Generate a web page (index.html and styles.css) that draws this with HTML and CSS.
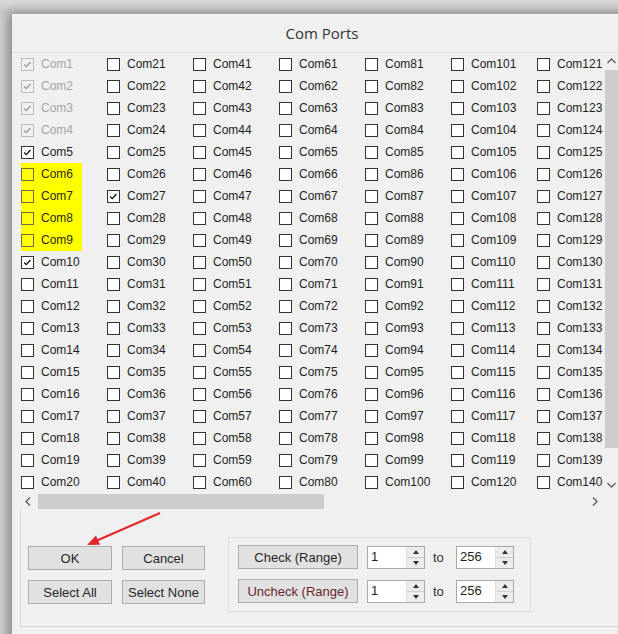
FILE: index.html
```html
<!DOCTYPE html>
<html>
<head>
<meta charset="utf-8">
<title>Com Ports</title>
<link rel="stylesheet" href="styles.css">
</head>
<body>
<div class="window">
  <div class="titlebar">Com Ports</div>

  <div class="list">
    <div class="list-main">
      <div class="grid">
        <label class="cb dis on"><i><svg viewBox="0 0 13 13"><path d="M2.5 6.5 5 9 10 3.5"/></svg></i>Com1</label>
        <label class="cb dis on"><i><svg viewBox="0 0 13 13"><path d="M2.5 6.5 5 9 10 3.5"/></svg></i>Com2</label>
        <label class="cb dis on"><i><svg viewBox="0 0 13 13"><path d="M2.5 6.5 5 9 10 3.5"/></svg></i>Com3</label>
        <label class="cb dis on"><i><svg viewBox="0 0 13 13"><path d="M2.5 6.5 5 9 10 3.5"/></svg></i>Com4</label>
        <label class="cb on"><i><svg viewBox="0 0 13 13"><path d="M2.5 6.5 5 9 10 3.5"/></svg></i>Com5</label>
        <label class="cb hl"><i></i>Com6</label>
        <label class="cb hl"><i></i>Com7</label>
        <label class="cb hl"><i></i>Com8</label>
        <label class="cb hl"><i></i>Com9</label>
        <label class="cb on"><i><svg viewBox="0 0 13 13"><path d="M2.5 6.5 5 9 10 3.5"/></svg></i>Com10</label>
        <label class="cb"><i></i>Com11</label>
        <label class="cb"><i></i>Com12</label>
        <label class="cb"><i></i>Com13</label>
        <label class="cb"><i></i>Com14</label>
        <label class="cb"><i></i>Com15</label>
        <label class="cb"><i></i>Com16</label>
        <label class="cb"><i></i>Com17</label>
        <label class="cb"><i></i>Com18</label>
        <label class="cb"><i></i>Com19</label>
        <label class="cb"><i></i>Com20</label>

        <label class="cb"><i></i>Com21</label>
        <label class="cb"><i></i>Com22</label>
        <label class="cb"><i></i>Com23</label>
        <label class="cb"><i></i>Com24</label>
        <label class="cb"><i></i>Com25</label>
        <label class="cb"><i></i>Com26</label>
        <label class="cb on"><i><svg viewBox="0 0 13 13"><path d="M2.5 6.5 5 9 10 3.5"/></svg></i>Com27</label>
        <label class="cb"><i></i>Com28</label>
        <label class="cb"><i></i>Com29</label>
        <label class="cb"><i></i>Com30</label>
        <label class="cb"><i></i>Com31</label>
        <label class="cb"><i></i>Com32</label>
        <label class="cb"><i></i>Com33</label>
        <label class="cb"><i></i>Com34</label>
        <label class="cb"><i></i>Com35</label>
        <label class="cb"><i></i>Com36</label>
        <label class="cb"><i></i>Com37</label>
        <label class="cb"><i></i>Com38</label>
        <label class="cb"><i></i>Com39</label>
        <label class="cb"><i></i>Com40</label>

        <label class="cb"><i></i>Com41</label>
        <label class="cb"><i></i>Com42</label>
        <label class="cb"><i></i>Com43</label>
        <label class="cb"><i></i>Com44</label>
        <label class="cb"><i></i>Com45</label>
        <label class="cb"><i></i>Com46</label>
        <label class="cb"><i></i>Com47</label>
        <label class="cb"><i></i>Com48</label>
        <label class="cb"><i></i>Com49</label>
        <label class="cb"><i></i>Com50</label>
        <label class="cb"><i></i>Com51</label>
        <label class="cb"><i></i>Com52</label>
        <label class="cb"><i></i>Com53</label>
        <label class="cb"><i></i>Com54</label>
        <label class="cb"><i></i>Com55</label>
        <label class="cb"><i></i>Com56</label>
        <label class="cb"><i></i>Com57</label>
        <label class="cb"><i></i>Com58</label>
        <label class="cb"><i></i>Com59</label>
        <label class="cb"><i></i>Com60</label>

        <label class="cb"><i></i>Com61</label>
        <label class="cb"><i></i>Com62</label>
        <label class="cb"><i></i>Com63</label>
        <label class="cb"><i></i>Com64</label>
        <label class="cb"><i></i>Com65</label>
        <label class="cb"><i></i>Com66</label>
        <label class="cb"><i></i>Com67</label>
        <label class="cb"><i></i>Com68</label>
        <label class="cb"><i></i>Com69</label>
        <label class="cb"><i></i>Com70</label>
        <label class="cb"><i></i>Com71</label>
        <label class="cb"><i></i>Com72</label>
        <label class="cb"><i></i>Com73</label>
        <label class="cb"><i></i>Com74</label>
        <label class="cb"><i></i>Com75</label>
        <label class="cb"><i></i>Com76</label>
        <label class="cb"><i></i>Com77</label>
        <label class="cb"><i></i>Com78</label>
        <label class="cb"><i></i>Com79</label>
        <label class="cb"><i></i>Com80</label>

        <label class="cb"><i></i>Com81</label>
        <label class="cb"><i></i>Com82</label>
        <label class="cb"><i></i>Com83</label>
        <label class="cb"><i></i>Com84</label>
        <label class="cb"><i></i>Com85</label>
        <label class="cb"><i></i>Com86</label>
        <label class="cb"><i></i>Com87</label>
        <label class="cb"><i></i>Com88</label>
        <label class="cb"><i></i>Com89</label>
        <label class="cb"><i></i>Com90</label>
        <label class="cb"><i></i>Com91</label>
        <label class="cb"><i></i>Com92</label>
        <label class="cb"><i></i>Com93</label>
        <label class="cb"><i></i>Com94</label>
        <label class="cb"><i></i>Com95</label>
        <label class="cb"><i></i>Com96</label>
        <label class="cb"><i></i>Com97</label>
        <label class="cb"><i></i>Com98</label>
        <label class="cb"><i></i>Com99</label>
        <label class="cb"><i></i>Com100</label>

        <label class="cb"><i></i>Com101</label>
        <label class="cb"><i></i>Com102</label>
        <label class="cb"><i></i>Com103</label>
        <label class="cb"><i></i>Com104</label>
        <label class="cb"><i></i>Com105</label>
        <label class="cb"><i></i>Com106</label>
        <label class="cb"><i></i>Com107</label>
        <label class="cb"><i></i>Com108</label>
        <label class="cb"><i></i>Com109</label>
        <label class="cb"><i></i>Com110</label>
        <label class="cb"><i></i>Com111</label>
        <label class="cb"><i></i>Com112</label>
        <label class="cb"><i></i>Com113</label>
        <label class="cb"><i></i>Com114</label>
        <label class="cb"><i></i>Com115</label>
        <label class="cb"><i></i>Com116</label>
        <label class="cb"><i></i>Com117</label>
        <label class="cb"><i></i>Com118</label>
        <label class="cb"><i></i>Com119</label>
        <label class="cb"><i></i>Com120</label>

        <label class="cb"><i></i>Com121</label>
        <label class="cb"><i></i>Com122</label>
        <label class="cb"><i></i>Com123</label>
        <label class="cb"><i></i>Com124</label>
        <label class="cb"><i></i>Com125</label>
        <label class="cb"><i></i>Com126</label>
        <label class="cb"><i></i>Com127</label>
        <label class="cb"><i></i>Com128</label>
        <label class="cb"><i></i>Com129</label>
        <label class="cb"><i></i>Com130</label>
        <label class="cb"><i></i>Com131</label>
        <label class="cb"><i></i>Com132</label>
        <label class="cb"><i></i>Com133</label>
        <label class="cb"><i></i>Com134</label>
        <label class="cb"><i></i>Com135</label>
        <label class="cb"><i></i>Com136</label>
        <label class="cb"><i></i>Com137</label>
        <label class="cb"><i></i>Com138</label>
        <label class="cb"><i></i>Com139</label>
        <label class="cb"><i></i>Com140</label>
      </div>

      <div class="vscroll">
        <span class="sb-btn"><svg viewBox="0 0 17 17"><path d="M4.5 10 8.5 6 12.5 10"/></svg></span>
        <span class="vthumb"></span>
        <span class="sb-btn"><svg viewBox="0 0 17 17"><path d="M4.5 7 8.5 11 12.5 7"/></svg></span>
      </div>
    </div>

    <div class="hscroll">
      <span class="sb-btn"><svg viewBox="0 0 17 17"><path d="M10 4.5 6 8.5 10 12.5"/></svg></span>
      <span class="htrack"><span class="hthumb"></span></span>
      <span class="sb-btn"><svg viewBox="0 0 17 17"><path d="M7 4.5 11 8.5 7 12.5"/></svg></span>
    </div>
  </div>

  <div class="panel">
    <div class="btns">
      <button class="btn">OK</button>
      <button class="btn">Cancel</button>
      <button class="btn">Select All</button>
      <button class="btn">Select None</button>
    </div>

    <div class="group">
      <div class="range-row">
        <button class="btn btn-range">Check (Range)</button>
        <div class="spin"><span class="spin-val">1</span><span class="spin-arrows"><b class="up"></b><b class="down"></b></span></div>
        <span class="to">to</span>
        <div class="spin"><span class="spin-val">256</span><span class="spin-arrows"><b class="up"></b><b class="down"></b></span></div>
      </div>
      <div class="range-row">
        <button class="btn btn-range btn-uncheck">Uncheck (Range)</button>
        <div class="spin"><span class="spin-val">1</span><span class="spin-arrows"><b class="up"></b><b class="down"></b></span></div>
        <span class="to">to</span>
        <div class="spin"><span class="spin-val">256</span><span class="spin-arrows"><b class="up"></b><b class="down"></b></span></div>
      </div>
    </div>
  </div>
</div>

<svg class="pointer" viewBox="0 0 618 634" width="618" height="634">
  <line x1="160" y1="513" x2="97" y2="540.5"/>
  <polygon points="87,545 100,544.8 96,535.6"/>
</svg>
</body>
</html>
```

FILE: styles.css
```css
html, body {
  margin: 0;
  padding: 0;
}

body {
  width: 618px;
  height: 634px;
  overflow: hidden;
  position: relative;
  background: linear-gradient(#d9d9d9, #c9c9c9 14px, #cfcfcf 14px);
  font-family: "Liberation Sans", Arial, sans-serif;
  color: #1e1e1e;
}

/* dialog frame */
.window {
  margin: 14px 0 0 12px;
  width: 622px;
  height: 640px;
  background: #f0f0f0;
  border-top: 1px solid #fbfbfb;
  box-shadow: -2px 0 10px 2px rgba(0, 0, 0, 0.35);
  box-sizing: border-box;
}

.titlebar {
  height: 37px;
  line-height: 37px;
  text-align: center;
  font-family: "Open Sans", "Liberation Sans", sans-serif;
  font-size: 15px;
  color: #333;
  border-bottom: 1px solid #e4e4e4;
  padding-right: 2px;
}

/* check-box list with scroll bars */
.list {
  margin-left: 8px;
}

.list-main {
  display: flex;
}

.grid {
  width: 582px;
  height: 440px;
  padding-left: 1px;
  overflow: hidden;
  display: grid;
  grid-auto-flow: column;
  grid-template-rows: repeat(20, 22px);
  grid-auto-columns: 86px;
}

.cb {
  display: flex;
  align-items: center;
  font-size: 12px;
  white-space: nowrap;
  color: #1e1e1e;
}

.cb i {
  flex: none;
  width: 13px;
  height: 13px;
  box-sizing: border-box;
  border: 1px solid #333;
  background: #fff;
  margin-right: 7px;
  display: flex;
}

.cb i svg {
  width: 11px;
  height: 11px;
}

.cb i path {
  fill: none;
  stroke: #111;
  stroke-width: 1.6;
}

.cb.dis {
  color: #a4a4a4;
}

.cb.dis i {
  border-color: #bcbcbc;
  background: #f0f0f0;
}

.cb.dis i path {
  stroke: #9a9a9a;
}

.cb.hl {
  width: 61px;
  background: #ffff00;
  color: #2a2a10;
}

.cb.hl i {
  background: #ffff00;
  border-color: #6e6e3c;
}

.vscroll {
  width: 17px;
  height: 440px;
  background: #f0f0f0;
  display: flex;
  flex-direction: column;
}

.sb-btn {
  flex: none;
  width: 17px;
  height: 17px;
  display: flex;
}

.sb-btn svg {
  width: 17px;
  height: 17px;
}

.sb-btn path {
  fill: none;
  stroke: #606060;
  stroke-width: 1.4;
}

.vthumb {
  flex: none;
  height: 378px;
  margin: 0 1px 28px 2px;
  background: #cdcdcd;
}

.hscroll {
  width: 583px;
  height: 17px;
  display: flex;
  background: #f0f0f0;
}

.htrack {
  flex: 1;
  display: flex;
  padding: 1px 0;
}

.hthumb {
  width: 286px;
  margin-left: 1px;
  background: #cdcdcd;
}

/* lower command area */
.panel {
  margin-left: 8px;
  height: 117px;
  border-left: 1px solid #d6d6d6;
  border-bottom: 1px solid #d6d6d6;
  box-sizing: border-box;
  padding: 27px 0 0 7px;
  display: flex;
  align-items: flex-start;
}

.btns {
  margin-top: 9px;
  display: grid;
  grid-template-columns: 84px 83px;
  grid-auto-rows: 24px;
  column-gap: 10px;
  row-gap: 10px;
}

.btn {
  margin: 0;
  padding: 0;
  background: #e1e1e1;
  border: 1px solid #adadad;
  font-family: "Liberation Sans", Arial, sans-serif;
  font-size: 13px;
  color: #262626;
  height: 24px;
}

.group {
  margin-left: 23px;
  border: 1px solid #dcdcdc;
  padding: 7px 16px 8px 9px;
}

.range-row {
  display: flex;
  align-items: center;
}

.range-row + .range-row {
  margin-top: 10px;
}

.btn-range {
  width: 120px;
}

.btn-uncheck {
  color: #6a1f2b;
}

.spin {
  margin-left: 9px;
  width: 58px;
  height: 23px;
  box-sizing: border-box;
  border: 1px solid #a9a9a9;
  background: #fff;
  display: flex;
}

.spin-val {
  flex: 1;
  font-size: 13px;
  line-height: 20px;
  padding-left: 3px;
  color: #1e1e1e;
}

.spin-arrows {
  width: 17px;
  display: flex;
  flex-direction: column;
  background: #ececec;
  border-left: 1px solid #e0e0e0;
}

.spin-arrows b {
  flex: 1;
  display: flex;
  align-items: center;
  justify-content: center;
}

.spin-arrows b.up {
  border-bottom: 1px solid #d0d0d0;
}

.spin-arrows b.up::after {
  content: "";
  border: 3px solid transparent;
  border-bottom: 4px solid #333;
  border-top: 0;
}

.spin-arrows b.down::after {
  content: "";
  border: 3px solid transparent;
  border-top: 4px solid #333;
  border-bottom: 0;
}

.to {
  width: 23px;
  padding-left: 8px;
  font-size: 13px;
  color: #333;
}

.to + .spin {
  margin-left: 0;
}

/* annotation arrow drawn over the dialog */
.pointer {
  position: absolute;
  left: 0;
  top: 0;
  pointer-events: none;
}

.pointer line {
  stroke: #e3262b;
  stroke-width: 2;
}

.pointer polygon {
  fill: #e3262b;
}
```
